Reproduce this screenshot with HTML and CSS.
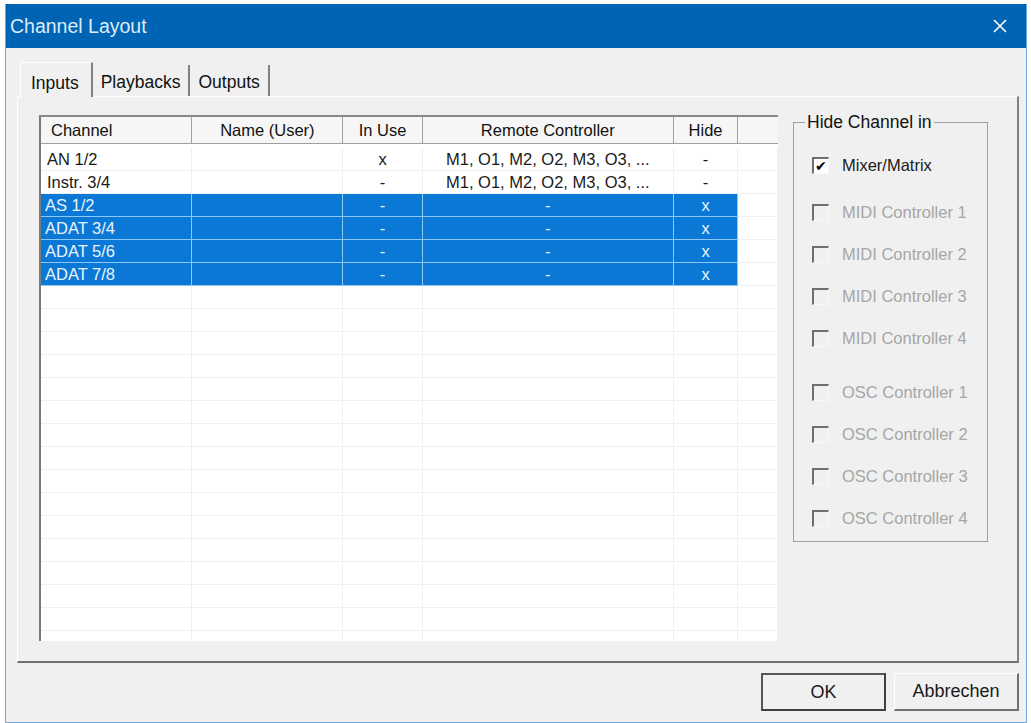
FILE: index.html
```html
<!DOCTYPE html>
<html lang="de">
<head>
    <meta charset="UTF-8">
    <title>Channel Layout</title>
    <link rel="stylesheet" href="styles.css">
</head>
<body>
    <div class="window">
        <div class="titlebar">
            <span class="title">Channel Layout</span>
            <svg class="close" width="16" height="16" viewBox="0 0 16 16">
                <path d="M2 2 L14 14 M14 2 L2 14" stroke="#ffffff" stroke-width="1.6" fill="none"/>
            </svg>
        </div>
        <div class="body">
            <div class="tabs">
                <div class="tab active">Inputs</div>
                <div class="tab">Playbacks</div>
                <div class="tab">Outputs</div>
            </div>
            <div class="pane">
                <div class="list">
                    <table>
                        <thead>
                            <tr>
                                <th class="c-channel left">Channel</th>
                                <th class="c-name">Name (User)</th>
                                <th class="c-use">In Use</th>
                                <th class="c-remote">Remote Controller</th>
                                <th class="c-hide">Hide</th>
                                <th class="c-fill"></th>
                            </tr>
                        </thead>
                        <tbody>
                            <tr class="spacer"><td colspan="6"></td></tr>
                            <tr>
                                <td class="left">AN 1/2</td><td></td><td>x</td>
                                <td>M1, O1, M2, O2, M3, O3, ...</td><td>-</td><td class="fill"></td>
                            </tr>
                            <tr>
                                <td class="left">Instr. 3/4</td><td></td><td>-</td>
                                <td>M1, O1, M2, O2, M3, O3, ...</td><td>-</td><td class="fill"></td>
                            </tr>
                            <tr class="sel">
                                <td class="left">AS 1/2</td><td></td><td>-</td><td>-</td><td>x</td><td class="fill"></td>
                            </tr>
                            <tr class="sel">
                                <td class="left">ADAT 3/4</td><td></td><td>-</td><td>-</td><td>x</td><td class="fill"></td>
                            </tr>
                            <tr class="sel">
                                <td class="left">ADAT 5/6</td><td></td><td>-</td><td>-</td><td>x</td><td class="fill"></td>
                            </tr>
                            <tr class="sel">
                                <td class="left">ADAT 7/8</td><td></td><td>-</td><td>-</td><td>x</td><td class="fill"></td>
                            </tr>
                            <tr><td></td><td></td><td></td><td></td><td></td><td class="fill"></td></tr>
                            <tr><td></td><td></td><td></td><td></td><td></td><td class="fill"></td></tr>
                            <tr><td></td><td></td><td></td><td></td><td></td><td class="fill"></td></tr>
                            <tr><td></td><td></td><td></td><td></td><td></td><td class="fill"></td></tr>
                            <tr><td></td><td></td><td></td><td></td><td></td><td class="fill"></td></tr>
                            <tr><td></td><td></td><td></td><td></td><td></td><td class="fill"></td></tr>
                            <tr><td></td><td></td><td></td><td></td><td></td><td class="fill"></td></tr>
                            <tr><td></td><td></td><td></td><td></td><td></td><td class="fill"></td></tr>
                            <tr><td></td><td></td><td></td><td></td><td></td><td class="fill"></td></tr>
                            <tr><td></td><td></td><td></td><td></td><td></td><td class="fill"></td></tr>
                            <tr><td></td><td></td><td></td><td></td><td></td><td class="fill"></td></tr>
                            <tr><td></td><td></td><td></td><td></td><td></td><td class="fill"></td></tr>
                            <tr><td></td><td></td><td></td><td></td><td></td><td class="fill"></td></tr>
                            <tr><td></td><td></td><td></td><td></td><td></td><td class="fill"></td></tr>
                            <tr><td></td><td></td><td></td><td></td><td></td><td class="fill"></td></tr>
                            <tr><td></td><td></td><td></td><td></td><td></td><td class="fill"></td></tr>
                        </tbody>
                    </table>
                </div>
                <fieldset class="group">
                    <legend>Hide Channel in</legend>
                    <div class="check on gap-after"><span class="box">&#10004;</span>Mixer/Matrix</div>
                    <div class="check"><span class="box"></span>MIDI Controller 1</div>
                    <div class="check"><span class="box"></span>MIDI Controller 2</div>
                    <div class="check"><span class="box"></span>MIDI Controller 3</div>
                    <div class="check gap-after-big"><span class="box"></span>MIDI Controller 4</div>
                    <div class="check"><span class="box"></span>OSC Controller 1</div>
                    <div class="check"><span class="box"></span>OSC Controller 2</div>
                    <div class="check"><span class="box"></span>OSC Controller 3</div>
                    <div class="check"><span class="box"></span>OSC Controller 4</div>
                </fieldset>
            </div>
            <div class="buttons">
                <button class="default">OK</button>
                <button>Abbrechen</button>
            </div>
        </div>
    </div>
</body>
</html>
```
FILE: styles.css
```css
body {
    margin: 0;
    background: #ffffff;
    font-family: "Liberation Sans", Arial, sans-serif;
    color: #111;
}
.window {
    margin: 4px 0 0 5px;
    width: 1020px;
    height: 718px;
    background: #f0f0f0;
    border: 1px solid #6fa8dc;
    border-top: none;
    display: flex;
    flex-direction: column;
}
.titlebar {
    height: 44px;
    background: #0064b4;
    display: flex;
    align-items: center;
    justify-content: space-between;
    padding: 0 18px 0 4px;
    flex-shrink: 0;
}
.title {
    color: #dcebf8;
    font-size: 19.5px;
}
.body {
    padding: 13px 7px 0 11px;
}
.tabs {
    display: flex;
    height: 35px;
    padding-left: 3px;
    align-items: flex-end;
}
.tab {
    font-size: 17.5px;
    height: 31px;
    line-height: 35px;
    padding: 0 8px;
    border-right: 2px solid #808080;
    box-sizing: border-box;
}
.tab.active {
    height: 35px;
    line-height: 40px;
    padding: 0 12px 0 10px;
    margin-bottom: -1px;
    background: #f0f0f0;
    border-left: 1px solid #ffffff;
    border-top: 1px solid #ffffff;
    position: relative;
}
.pane {
    height: 567px;
    box-sizing: border-box;
    border-top: 1px solid #ffffff;
    border-left: 1px solid #ffffff;
    border-right: 2px solid #808080;
    border-bottom: 2px solid #707070;
    padding: 18px 0 0 21px;
    display: flex;
    align-items: flex-start;
}
.list {
    width: 739px;
    height: 526px;
    box-sizing: border-box;
    background: #ffffff;
    border-top: 2px solid #8a8a8a;
    border-left: 2px solid #7a7a7a;
    overflow: hidden;
    flex-shrink: 0;
}
table {
    border-collapse: collapse;
    table-layout: fixed;
    font-size: 16.5px;
}
th {
    height: 26px;
    padding: 0;
    font-weight: normal;
    background: #f6f6f6;
    border-right: 1px solid #a0a0a0;
    border-bottom: 1px solid #a0a0a0;
    text-align: center;
    white-space: nowrap;
}
th.left {
    text-align: left;
    padding-left: 10px;
}
th.c-channel { width: 142px; }
th.c-name { width: 151px; }
th.c-use { width: 79px; }
th.c-remote { width: 251px; }
th.c-hide { width: 64px; }
th.c-fill { width: 40px; border-right: none; }
td {
    height: 22px;
    padding: 0;
    text-align: center;
    white-space: nowrap;
    border-right: 1px solid #efefef;
    border-bottom: 1px solid #efefef;
    line-height: 20px;
    color: #1a1a1a;
}
td.left {
    text-align: left;
    padding-left: 6px;
}
tr.spacer td {
    height: 4px;
    border: none;
}
tr.sel td {
    background: #0a78d4;
    color: #e8f4ff;
    border-right: 1px solid #8cc8f4;
    border-bottom: 1px solid #8cc8f4;
}
tr.sel td.left {
    padding-left: 4px;
}
tr.sel td.fill {
    background: #ffffff;
    border-right: 1px solid #efefef;
    border-bottom: 1px solid #efefef;
}
.group {
    margin: -3px 0 0 15px;
    width: 195px;
    height: 430px;
    box-sizing: border-box;
    border: 1px solid #a0a0a0;
    padding: 0 0 0 18px;
}
.group legend {
    font-size: 17.5px;
    padding: 0 2px;
    margin-left: -7px;
    line-height: 20px;
}
.check {
    display: flex;
    align-items: center;
    height: 42px;
    font-size: 16.5px;
    color: #a6a6a6;
}
.check:first-of-type {
    margin-top: 12px;
}
.check.on {
    color: #1a1a1a;
}
.check.gap-after {
    margin-bottom: 5px;
}
.check.gap-after-big {
    margin-bottom: 12px;
}
.box {
    width: 17px;
    height: 17px;
    box-sizing: border-box;
    border-top: 2px solid #6f6f6f;
    border-left: 2px solid #6f6f6f;
    border-right: 1px solid #f8f8f8;
    border-bottom: 1px solid #f8f8f8;
    margin-right: 13px;
    font-size: 14px;
    line-height: 15px;
    text-align: center;
    color: #000;
}
.check.on .box {
    background: #ffffff;
}
.buttons {
    display: flex;
    justify-content: flex-end;
    gap: 8px;
    margin-top: 10px;
}
button {
    font-family: "Liberation Sans", Arial, sans-serif;
    font-size: 18px;
    width: 125px;
    height: 38px;
    background: #f0f0f0;
    color: #1a1a1a;
    border-top: 1px solid #ffffff;
    border-left: 1px solid #ffffff;
    border-right: 2px solid #707070;
    border-bottom: 2px solid #707070;
}
button.default {
    border: 2px solid #555555;
    border-right-color: #404040;
    border-bottom-color: #404040;
}
```
